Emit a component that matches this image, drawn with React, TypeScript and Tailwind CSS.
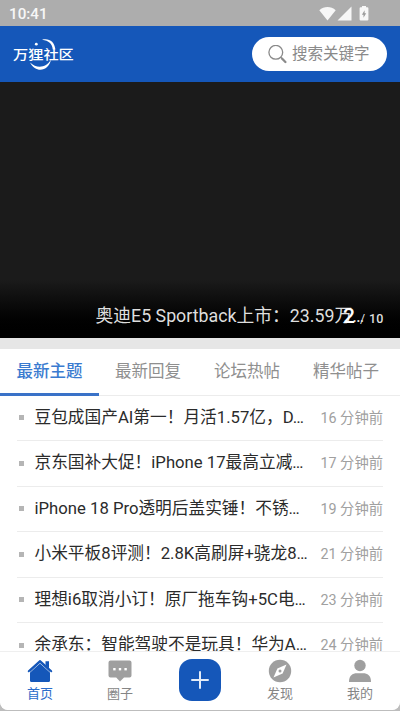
import clsx from 'clsx'
import type { ReactNode } from 'react'

type Topic = {
  title: string
  time: string
}

const TABS = ['最新主题', '最新回复', '论坛热帖', '精华帖子']

const TOPICS: Topic[] = [
  { title: '豆包成国产AI第一！月活1.57亿，D…', time: '16 分钟前' },
  { title: '京东国补大促！iPhone 17最高立减…', time: '17 分钟前' },
  { title: 'iPhone 18 Pro透明后盖实锤！不锈…', time: '19 分钟前' },
  { title: '小米平板8评测！2.8K高刷屏+骁龙8…', time: '21 分钟前' },
  { title: '理想i6取消小订！原厂拖车钩+5C电…', time: '23 分钟前' },
  { title: '余承东：智能驾驶不是玩具！华为A…', time: '24 分钟前' },
]

function StatusBar() {
  return (
    <div className="flex h-[26px] shrink-0 items-center justify-between bg-[#adadad] pt-[3px] pr-[31px] pl-[9px] text-[#f7f7f7]">
      <span className="text-[15.2px] leading-none font-medium">10:41</span>
      <svg className="-mt-[2px]" width="50" height="16" viewBox="0 0 50 16" fill="currentColor">
        <path d="M0.3 4.2C5 -0.1 12 -0.1 16.7 4.2L8.5 14.4Z" />
        <path d="M32.5 0.5V14.4H18.5Z" />
        <path d="M43 0h4v1.2h1.4a1 1 0 0 1 1 1v11.3a1 1 0 0 1-1 1h-6.8a1 1 0 0 1-1-1V2.2a1 1 0 0 1 1-1H43Z" />
        <path d="M45.6 4.3v3h1.6l-2.7 4.5v-3h-1.6Z" fill="#9a9a9a" />
      </svg>
    </div>
  )
}

function Logo() {
  return (
    <div className="relative h-[34px] w-[62px] text-white">
      <span className="absolute top-[10px] left-0 scale-y-85 text-[15.2px] leading-[17px] font-medium whitespace-nowrap">
        万狸社区
      </span>
      <svg className="absolute top-0 left-0" width="62" height="34" viewBox="0 0 62 34" fill="currentColor">
        <path d="M29 2.8C36 1 41.5 4.5 42.3 12.5L39.800 12.500C39 6.500 36 3.800 29 2.8Z" />
        <path d="M17 25.500C23 37 36 34 38 22.500C33 31 24 32 17 25.500Z" />
        <circle cx="23.300" cy="7.200" r="1.400" />
      </svg>
    </div>
  )
}

function Header() {
  return (
    <header className="flex h-14 shrink-0 items-center justify-between bg-[#1557b9] pr-[13px] pl-[13px]">
      <Logo />
      <div className="flex h-[34px] w-[135px] items-center gap-[5px] rounded-full bg-white pl-4 text-[#8a8a8a]">
        <svg width="19" height="19" viewBox="0 0 19 19" fill="none" stroke="currentColor">
          <circle cx="7.800" cy="7.300" r="6.900" strokeWidth="1.300" />
          <path d="M12.800 12.300L14.500 14" strokeWidth="1.300" />
          <path d="M14.200 13.700L17.400 17" strokeWidth="2.300" strokeLinecap="round" />
        </svg>
        <span className="pt-px text-[15.5px] leading-none whitespace-nowrap">搜索关键字</span>
      </div>
    </header>
  )
}

function Banner() {
  return (
    <div className="relative h-64 shrink-0 bg-[#1b1b1b]">
      <div className="absolute inset-x-0 bottom-0 h-[58px] bg-linear-to-b from-[#1b1b1b] via-[#080808] to-black" />
      <p className="absolute top-[222px] left-[95.500px] text-[17.800px] leading-6 whitespace-nowrap text-[#dedede]">
        奥迪E5 Sportback上市：23.59万…
      </p>
      {/* Slide counter, drawn over the end of the headline */}
      <div className="absolute top-[222px] left-[343px] flex items-baseline leading-6 text-white">
        <span className="text-[21px] font-medium">2</span>
        <span className="ml-[5px] text-[12.5px] text-[#dedede]">/</span>
        <span className="ml-[4px] text-[12.5px] font-medium text-[#dedede]">10</span>
      </div>
    </div>
  )
}

function Tabs() {
  return (
    <div className="flex h-[46.500px] shrink-0 border-b border-[#ececec]">
      {TABS.map((tab, index) => (
        <div
          key={tab}
          className={clsx(
            'flex w-[99px] items-center justify-center text-[16.5px] leading-none whitespace-nowrap',
            index === 0
              ? '-mb-px border-b-[3px] border-[#3a72c8] pt-[2px] font-medium text-[#3a7bd0]'
              : 'pr-px text-[#8f8f8f]'
          )}
        >
          {tab}
        </div>
      ))}
    </div>
  )
}

function TopicRow({ topic }: { topic: Topic }) {
  return (
    <li className="flex h-[45.500px] shrink-0 items-center border-b border-[#ececec] text-[16.700px] leading-none whitespace-nowrap text-[#2b2b2b]">
      <span className="mr-[10.500px] ml-[2px] size-[5px] bg-[#b5b5b5]" />
      <span className="pt-px">{topic.title}</span>
      <span className="ml-auto text-[14.3px] text-[#a0a0a0]">{topic.time}</span>
    </li>
  )
}

function NavItem({ label, active, children }: { label: string; active?: boolean; children: ReactNode }) {
  return (
    <div className={clsx('flex w-20 flex-col items-center pt-[7px]', active ? 'text-[#1557b9]' : 'text-[#9f9f9f]')}>
      <svg width="26" height="24" viewBox="0 0 26 24" fill="currentColor">
        {children}
      </svg>
      <span className={clsx('mt-[4px] text-[13px] leading-[14px]', active ? 'text-[#2a6cca]' : 'text-[#858585]')}>
        {label}
      </span>
    </div>
  )
}

function BottomNav() {
  return (
    <nav className="flex h-[59px] shrink-0 rounded-b-lg border-t border-[#efefef] bg-white">
      <NavItem label="首页" active>
        <path d="M18.500 2.200H22V9.500L18.500 6.200Z" />
        <path d="M3 11.500L13 2.500L23 11.500V21.500a1.500 1.500 0 0 1-1.500 1.500h-17A1.500 1.500 0 0 1 3 21.500Z" />
        <path d="M2.200 14L13 4.200L23.800 14" fill="none" stroke="white" strokeWidth="0.600" />
        <path d="M1.700 12.300L13 2L24.300 12.300" fill="none" stroke="currentColor" strokeWidth="1.900" strokeLinecap="round" strokeLinejoin="round" />
      </NavItem>
      <NavItem label="圈子">
        <path d="M3.500 1.500h19A2 2 0 0 1 24.500 3.500v13a2 2 0 0 1-2 2H17L13 22.500L9.200 18.500H3.500a2 2 0 0 1-2-2v-13a2 2 0 0 1 2-2Z" />
        <g fill="white">
          <rect x="6.200" y="9" width="2.400" height="2.400" />
          <rect x="11.800" y="9" width="2.400" height="2.400" />
          <rect x="17.400" y="9" width="2.400" height="2.400" />
        </g>
      </NavItem>
      <div className="flex w-20 justify-center pt-[7px]">
        <div className="flex h-[42px] w-[42px] items-center justify-center rounded-[13px] bg-[#1557b9]">
          <svg width="18" height="18" viewBox="0 0 18 18" stroke="#e4ecf8" strokeWidth="2" strokeLinecap="round">
            <path d="M9 1V17M1 9H17" />
          </svg>
        </div>
      </div>
      <NavItem label="发现">
        <circle cx="13" cy="12" r="11.200" />
        <path d="M19.500 5.500L15.600 14.600L6.500 18.500L10.400 9.400Z" fill="white" />
        <circle cx="13" cy="12" r="1.500" />
      </NavItem>
      <NavItem label="我的">
        <circle cx="13" cy="6.500" r="5.700" />
        <path d="M2 23C2 16.500 5.500 14.300 10 14.300h6c4.500 0 8 2.200 8 8.700Z" />
      </NavItem>
    </nav>
  )
}

export default function App() {
  return (
    <div className="h-[711px] w-[400px] overflow-hidden bg-[#bdbdbd] font-['Roboto','Noto_Sans_CJK_SC',sans-serif]">
      <div className="flex h-[710px] flex-col overflow-hidden rounded-b-lg bg-white">
        <StatusBar />
        <Header />
        <Banner />
        <div className="h-[11px] shrink-0 bg-[#e6e6e6]" />
        <Tabs />
        <ul className="flex min-h-0 flex-1 flex-col overflow-hidden px-[17px]">
          {TOPICS.map(topic => (
            <TopicRow key={topic.title} topic={topic} />
          ))}
        </ul>
        <BottomNav />
      </div>
    </div>
  )
}
